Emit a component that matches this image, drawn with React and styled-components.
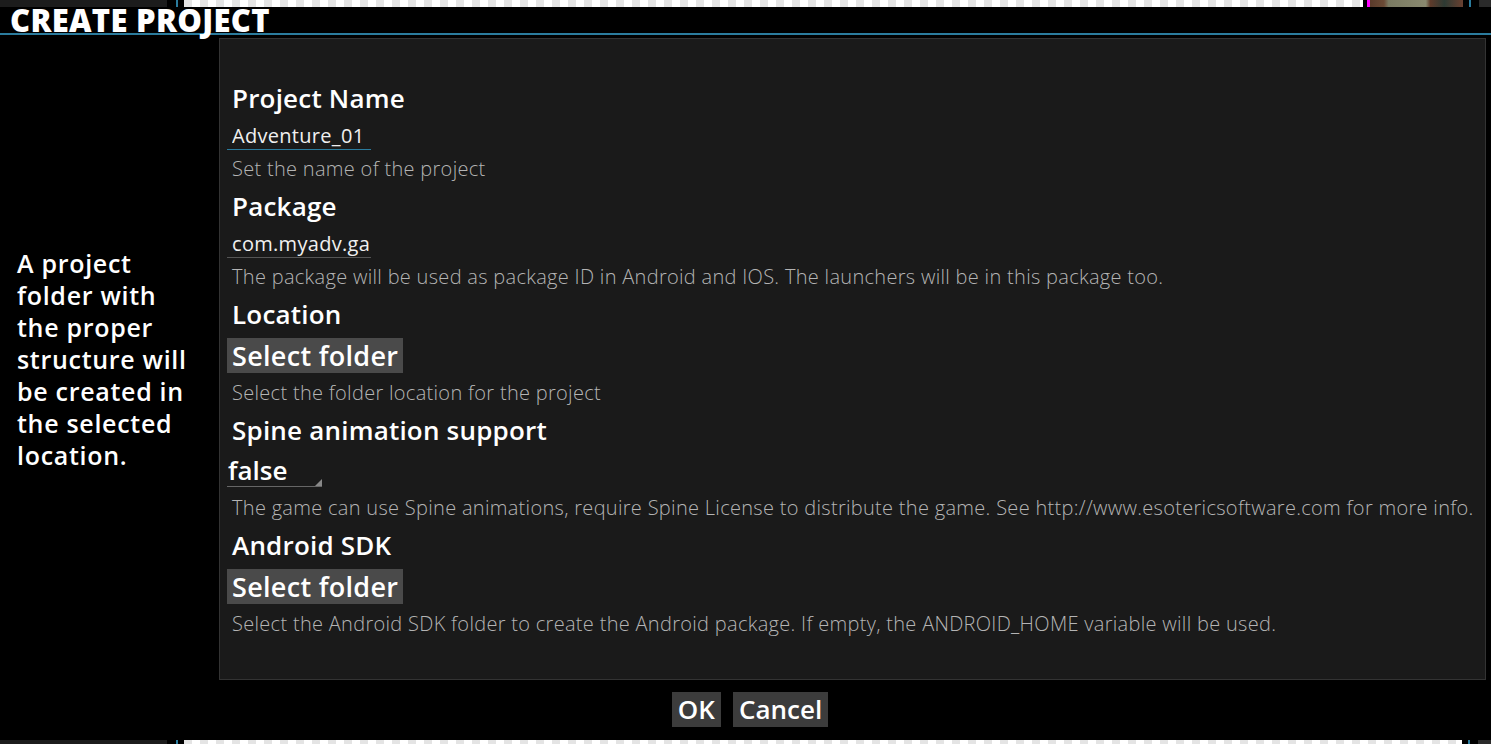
import React from 'react';
import styled, { createGlobalStyle } from 'styled-components';

const GlobalStyle = createGlobalStyle`
  html, body {
    margin: 0;
    padding: 0;
    background: #000;
    overflow: hidden;
  }
  * {
    box-sizing: border-box;
  }
`;

const FONT = `"Open Sans", Lato, "DejaVu Sans", sans-serif`;

const Styled = {
  Screen: styled.div`
    display: flex;
    flex-direction: column;
    width: 1491px;
    height: 744px;
    background: #000;
    font-family: ${FONT};
    color: #fff;
  `,

  Strip: styled.div`
    display: flex;
    height: ${({ h }) => h}px;
    flex-shrink: 0;
  `,

  StripPart: styled.div`
    width: ${({ w }) => (w ? `${w}px` : 'auto')};
    flex: ${({ w }) => (w ? 'none' : '1')};
    background: ${({ bg }) => bg};
  `,

  Checker: styled.div`
    width: ${({ w }) => w}px;
    background: repeating-conic-gradient(#ffffff 0% 25%, #e4e4e4 0% 50%) 0 0 / 16px 16px;
  `,

  Sprite: styled.div`
    width: ${({ w }) => w}px;
    border-left: 3px solid #ff00ff;
    margin-left: 4px;
    background: linear-gradient(90deg, #5a3a2a 0%, #6b4a35 15%, #7a7a62 20%, #8a8a70 60%, #5e3b2b 65%, #2d3a33 80%, #6a4030 100%);
  `,

  TitleBar: styled.div`
    height: 28px;
    flex-shrink: 0;
    padding-left: 10px;
    border-bottom: 2px solid #2b7c9e;
    display: flex;
    align-items: flex-end;
    h1 {
      margin: 0;
      font-weight: 800;
      font-size: 31px;
      line-height: 26px;
      letter-spacing: 0.3px;
    }
  `,

  Body: styled.div`
    display: flex;
    flex-shrink: 0;
    margin-top: 3px;
    height: 642px;
  `,

  Hint: styled.div`
    width: 219px;
    padding-left: 17px;
    padding-right: 20px;
    display: flex;
    align-items: center;
    p {
      margin: 0;
      font-size: 25px;
      font-weight: 600;
      line-height: 32px;
      letter-spacing: 0.7px;
    }
  `,

  Panel: styled.section`
    flex: 1;
    margin-right: 5px;
    background: #1a1a1a;
    border: 1px solid #333;
    padding: 41px 0 0 7px;
    display: flex;
    flex-direction: column;
    gap: 4px;
  `,

  Field: styled.div`
    display: flex;
    flex-direction: column;
    align-items: flex-start;
  `,

  Label: styled.h2`
    margin: 0;
    padding-left: 5px;
    height: 36px;
    font-size: 26px;
    font-weight: 600;
    line-height: 37px;
    letter-spacing: 0.2px;
  `,

  Input: styled.input`
    width: 144px;
    height: 34px;
    margin-bottom: 2px;
    padding: 6px 0 0 5px;
    background: transparent;
    border: none;
    border-bottom: 1px solid ${({ focused }) => (focused ? '#2b7c9e' : '#555')};
    color: #f0f0f0;
    font-family: ${FONT};
    font-size: 20px;
    letter-spacing: 0.3px;
    outline: none;
  `,

  Description: styled.p`
    margin: 0;
    padding-left: 5px;
    height: 32px;
    font-size: 20px;
    font-weight: 300;
    line-height: 34px;
    letter-spacing: 0.3px;
    color: #b4b4b4;
    white-space: nowrap;
  `,

  FolderButton: styled.button`
    margin: 6px 0 3px;
    height: 35px;
    padding: 0 5px;
    background: #4a4a4a;
    border: none;
    color: #fff;
    font-family: ${FONT};
    font-size: 27px;
    font-weight: 600;
    line-height: 35px;
    letter-spacing: 0.3px;
  `,

  Select: styled.div`
    position: relative;
    width: 95px;
    height: 39px;
    margin-bottom: 4px;
    padding: 5px 0 0 1px;
    border-bottom: 1px solid #666;
    font-size: 26px;
    font-weight: 600;
    line-height: 34px;
    &::after {
      content: '';
      position: absolute;
      right: 0;
      bottom: 0;
      border-left: 7px solid transparent;
      border-bottom: 7px solid #888;
    }
  `,

  Footer: styled.div`
    flex: 1;
    display: flex;
    justify-content: center;
    align-items: flex-start;
    gap: 12px;
    padding: 12px 0 0 9px;
  `,

  DialogButton: styled.button`
    height: 35px;
    padding: 0 6px;
    background: #3c3c3c;
    border: none;
    color: #fff;
    font-family: ${FONT};
    font-size: 26px;
    font-weight: 600;
    line-height: 35px;
  `,
};

const BackdropStrip = ({ h, sprite }) => (
  <Styled.Strip h={h}>
    <Styled.StripPart w={167} bg="#1c1c1c" />
    <Styled.StripPart w={9} bg="#000" />
    <Styled.StripPart w={2} bg="#2b7c9e" />
    <Styled.StripPart w={6} bg="#000" />
    {sprite ? (
      <>
        <Styled.Checker w={1179} />
        <Styled.Sprite w={96} />
      </>
    ) : (
      <Styled.Checker w={1278} />
    )}
    <Styled.StripPart w={6} bg="#000" />
    <Styled.StripPart w={2} bg="#2b7c9e" />
    <Styled.StripPart w={8} bg="#000" />
    <Styled.StripPart bg="#2a2a2a" />
  </Styled.Strip>
);

const fields = [
  {
    label: 'Project Name',
    control: <Styled.Input focused defaultValue="Adventure_01" />,
    description: 'Set the name of the project',
  },
  {
    label: 'Package',
    control: <Styled.Input defaultValue="com.myadv.ga" />,
    description: 'The package will be used as package ID in Android and IOS. The launchers will be in this package too.',
  },
  {
    label: 'Location',
    control: <Styled.FolderButton type="button">Select folder</Styled.FolderButton>,
    description: 'Select the folder location for the project',
  },
  {
    label: 'Spine animation support',
    control: <Styled.Select>false</Styled.Select>,
    description:
      'The game can use Spine animations, require Spine License to distribute the game. See http://www.esotericsoftware.com for more info.',
  },
  {
    label: 'Android SDK',
    control: <Styled.FolderButton type="button">Select folder</Styled.FolderButton>,
    description: 'Select the Android SDK folder to create the Android package. If empty, the ANDROID_HOME variable will be used.',
  },
];

const App = () => {
  return (
    <Styled.Screen>
      <GlobalStyle />
      <BackdropStrip h={7} sprite />
      <Styled.TitleBar>
        <h1>CREATE PROJECT</h1>
      </Styled.TitleBar>
      <Styled.Body>
        <Styled.Hint>
          <p>A project folder with the proper structure will be created in the selected location.</p>
        </Styled.Hint>
        <Styled.Panel>
          {fields.map(field => (
            <Styled.Field key={field.label}>
              <Styled.Label>{field.label}</Styled.Label>
              {field.control}
              <Styled.Description>{field.description}</Styled.Description>
            </Styled.Field>
          ))}
        </Styled.Panel>
      </Styled.Body>
      <Styled.Footer>
        <Styled.DialogButton type="button">OK</Styled.DialogButton>
        <Styled.DialogButton type="button">Cancel</Styled.DialogButton>
      </Styled.Footer>
      <BackdropStrip h={4} />
    </Styled.Screen>
  );
};

export default App;
